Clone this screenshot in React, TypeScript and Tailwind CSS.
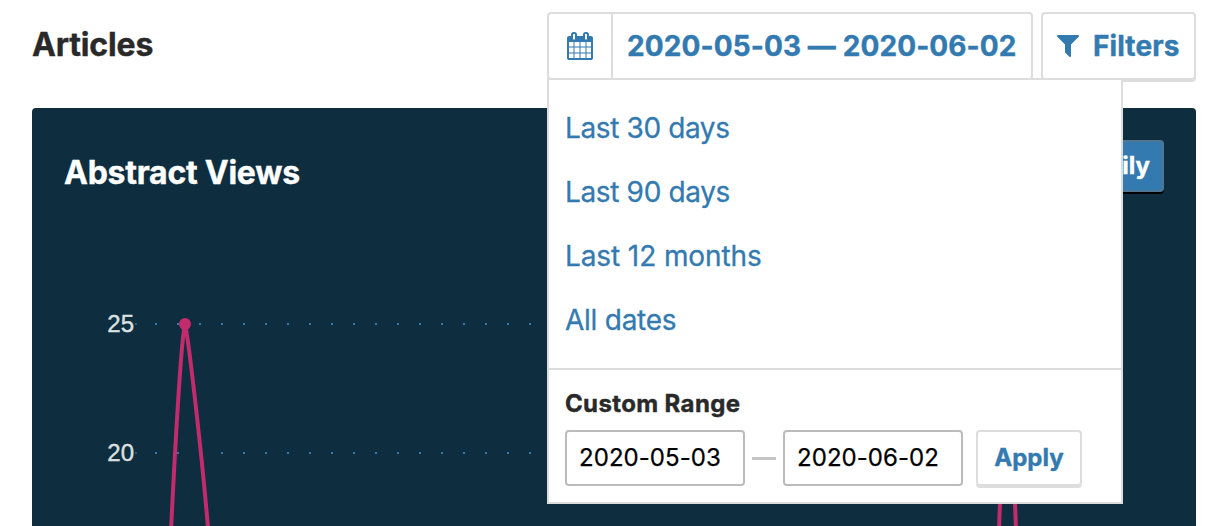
import React from "react";

const PRESETS = [
  { label: "Last 30 days", tracking: "tracking-[-0.38px]" },
  { label: "Last 90 days", tracking: "tracking-[-0.35px]" },
  { label: "Last 12 months", tracking: "tracking-[-0.1px]" },
  { label: "All dates", tracking: "tracking-[-0.25px]" },
];

function CalendarIcon() {
  return (
    <svg width="26" height="28" viewBox="0 0 1664 1792" fill="currentColor">
      <path d="M128 1664h288v-288h-288v288zM480 1664h320v-288h-320v288zM128 1312h288v-320h-288v320zM480 1312h320v-320h-320v320zM128 928h288v-288h-288v288zM864 1664h320v-288h-320v288zM480 928h320v-288h-320v288zM1248 1664h288v-288h-288v288zM864 1312h320v-320h-320v320zM512 448v-288q0-13-9.500-22.500t-22.500-9.500h-64q-13 0-22.500 9.500t-9.500 22.500v288q0 13 9.500 22.500t22.500 9.500h64q13 0 22.500-9.500t9.500-22.500zM1248 1312h288v-320h-288v320zM864 928h320v-288h-320v288zM1248 928h288v-288h-288v288zM1280 448v-288q0-13-9.500-22.500t-22.500-9.500h-64q-13 0-22.500 9.500t-9.500 22.500v288q0 13 9.500 22.500t22.500 9.500h64q13 0 22.500-9.500t9.500-22.500zM1664 384v1280q0 52-38 90t-90 38h-1408q-52 0-90-38t-38-90v-1280q0-52 38-90t90-38h128v-96q0-66 47-113t113-47h64q66 0 113 47t47 113v96h384v-96q0-66 47-113t113-47h64q66 0 113 47t47 113v96h128q52 0 90 38t38 90z" />
    </svg>
  );
}

function FilterIcon() {
  return (
    <svg width="22" height="22" viewBox="0 0 1408 1408" fill="currentColor">
      <path d="M1403 39q17 41-14 70l-493 493v742q0 42-39 59-13 5-25 5-27 0-45-19l-256-256q-19-19-19-45v-486l-493-493q-31-29-14-70 17-39 59-39h1280q42 0 59 39z" />
    </svg>
  );
}

function Chart() {
  return (
    <svg className="block w-full" height="266" viewBox="32 260 1164 266">
      {[
        { label: "25", y: 324 },
        { label: "20", y: 453 },
      ].map((tick) => (
        <g key={tick.label}>
          <line x1="155" x2="1116" y1={tick.y} y2={tick.y} stroke="#337ab0" strokeWidth="2" strokeDasharray="2 20" />
          <line x1="135" x2="137" y1={tick.y} y2={tick.y} stroke="#337ab0" strokeWidth="2" strokeOpacity="0.6" />
          <text x="134" y={tick.y + 8} textAnchor="end" fontSize="24" fill="#dbe0e2" stroke="#dbe0e2" strokeWidth="0.4" fontFamily="Liberation Sans, Arial, sans-serif">
            {tick.label}
          </text>
        </g>
      ))}
      <g fill="none" stroke="#c22b6c" strokeWidth="4" strokeLinejoin="round">
        <path d="M171 530 C174.500 460 181 340 185 324 C188 335 201.500 450 208.200 530" />
        <path d="M999 530 C1001 470 1004 420 1007 420 C1010 420 1014 470 1016 530" />
      </g>
      <circle cx="185" cy="324" r="6" fill="#c22b6c" />
    </svg>
  );
}

function DateInput({ value }: { value: string }) {
  return (
    <input
      type="text"
      defaultValue={value}
      className="h-14 w-[180px] rounded-[4px] border-2 border-[#bbb] bg-white pb-0.5 pl-3 text-[24px] font-normal tracking-[0.05px] text-black outline-none [-webkit-text-stroke:0.25px]"
    />
  );
}

function DateRangeMenu() {
  return (
    <div className="absolute -left-0.5 top-16 z-10 h-[426px] w-[576px] border-2 border-[#ddd] bg-white">
      <ul className="flex h-[290px] flex-col border-b-2 border-[#ddd] pt-4">
        {PRESETS.map(({ label, tracking }) => (
          <li
            key={label}
            className={`flex h-16 items-center pl-4 text-[28px] font-normal text-[#337ab0] [-webkit-text-stroke:0.3px] ${tracking}`}
          >
            {label}
          </li>
        ))}
      </ul>
      <div className="px-4 pt-[18px]">
        <div className="h-8 text-[24px] leading-8 font-bold tracking-[0.37px] text-[#292929]">Custom Range</div>
        <div className="mt-[10px] flex items-center">
          <DateInput value="2020-05-03" />
          <span className="mx-[7px] mt-px h-[3px] w-6 bg-[#c4c4c4]" />
          <DateInput value="2020-06-02" />
          <button className="ml-[13px] h-14 w-[106px] rounded-[4px] border-2 border-[#ddd] text-[24px] font-bold text-[#337ab0] shadow-[0_2px_0_#ddd]">
            Apply
          </button>
        </div>
      </div>
    </div>
  );
}

export default function App() {
  return (
    <div className="h-[526px] w-[1222px] overflow-hidden bg-white pt-3 pr-[26px] pl-8 font-['Inter','Liberation_Sans',sans-serif] [-webkit-text-stroke:0.4px]">
      <header className="flex h-24 items-start justify-between">
        <h1 className="pt-[13px] text-[32px] leading-10 font-bold tracking-[-0.15px] text-[#292929]">Articles</h1>
        <div className="flex gap-2 text-[28px] font-bold text-[#337ab0]">
          <div className="relative flex h-[68px] w-[486px] rounded-[4px] border-2 border-[#ddd]">
            <div className="flex w-16 items-center justify-center border-r-2 border-[#ddd]">
              <CalendarIcon />
            </div>
            <div className="flex flex-1 items-center pl-[14px] tracking-[0.11px] whitespace-nowrap">2020-05-03 — 2020-06-02</div>
            <DateRangeMenu />
          </div>
          <button className="flex h-[68px] w-[155px] items-center gap-3.5 rounded-[4px] border-2 border-[#ddd] pl-3.5 tracking-[0.1px] shadow-[0_2px_0_#ddd]">
            <FilterIcon />
            Filters
          </button>
        </div>
      </header>
      <section className="h-[418px] rounded-t-[4px] bg-[#0e2d3e]">
        <div className="flex h-[152px] items-start justify-between px-8 pt-8">
          <h2 className="pt-[13px] text-[32px] leading-10 font-bold tracking-[-0.25px] text-white">Abstract Views</h2>
          <button className="h-[52px] rounded-[4px] border-2 border-[#4f7794] bg-[#337ab0] px-3 text-[24px] font-bold text-white shadow-[0_2px_0_#000]">
            Daily
          </button>
        </div>
        <Chart />
      </section>
    </div>
  );
}
